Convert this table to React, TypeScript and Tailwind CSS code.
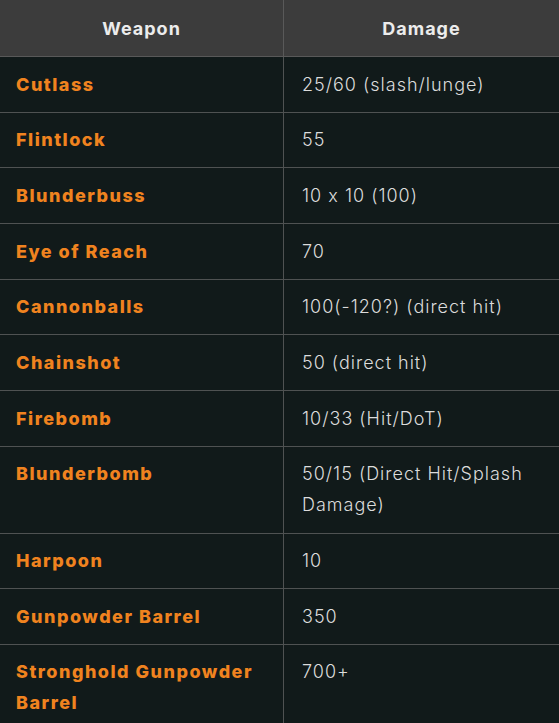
const ROWS: { weapon: string; damage: string }[] = [
  { weapon: "Cutlass", damage: "25/60 (slash/lunge)" },
  { weapon: "Flintlock", damage: "55" },
  { weapon: "Blunderbuss", damage: "10 x 10 (100)" },
  { weapon: "Eye of Reach", damage: "70" },
  { weapon: "Cannonballs", damage: "100(-120?) (direct hit)" },
  { weapon: "Chainshot", damage: "50 (direct hit)" },
  { weapon: "Firebomb", damage: "10/33 (Hit/DoT)" },
  { weapon: "Blunderbomb", damage: "50/15 (Direct Hit/Splash Damage)" },
  { weapon: "Harpoon", damage: "10" },
  { weapon: "Gunpowder Barrel", damage: "350" },
  { weapon: "Stronghold Gunpowder Barrel", damage: "700+" },
];

export default function App() {
  return (
    <div className="min-h-[723px] w-[559px] overflow-hidden bg-[#111a1a] font-['Inter','Roboto',sans-serif] text-[18px] leading-[31px] [font-feature-settings:'calt'_0]">
      <div className="grid grid-cols-[284px_1fr]">
        <div className="flex h-[57px] items-center justify-center border-r border-b border-[#595959] bg-[#3c3c3c] font-bold tracking-[1px] text-[#ececec]">
          Weapon
        </div>
        <div className="flex h-[57px] items-center justify-center border-b border-[#595959] bg-[#3c3c3c] font-bold tracking-[1px] text-[#ececec]">
          Damage
        </div>
        {ROWS.map((r) => (
          <div key={r.weapon} className="contents">
            <div className="border-r border-b border-[#4f5252] px-4 pt-[11.5px] pb-[12.2px] font-extrabold tracking-[1.5px] text-[#f0831f]">
              {r.weapon}
            </div>
            <div className="border-b border-[#4f5252] pt-[11.5px] pb-[12.2px] pl-[18px] pr-3 font-light tracking-[1px] text-[#dcdcdc]">
              {r.damage}
            </div>
          </div>
        ))}
      </div>
    </div>
  );
}
